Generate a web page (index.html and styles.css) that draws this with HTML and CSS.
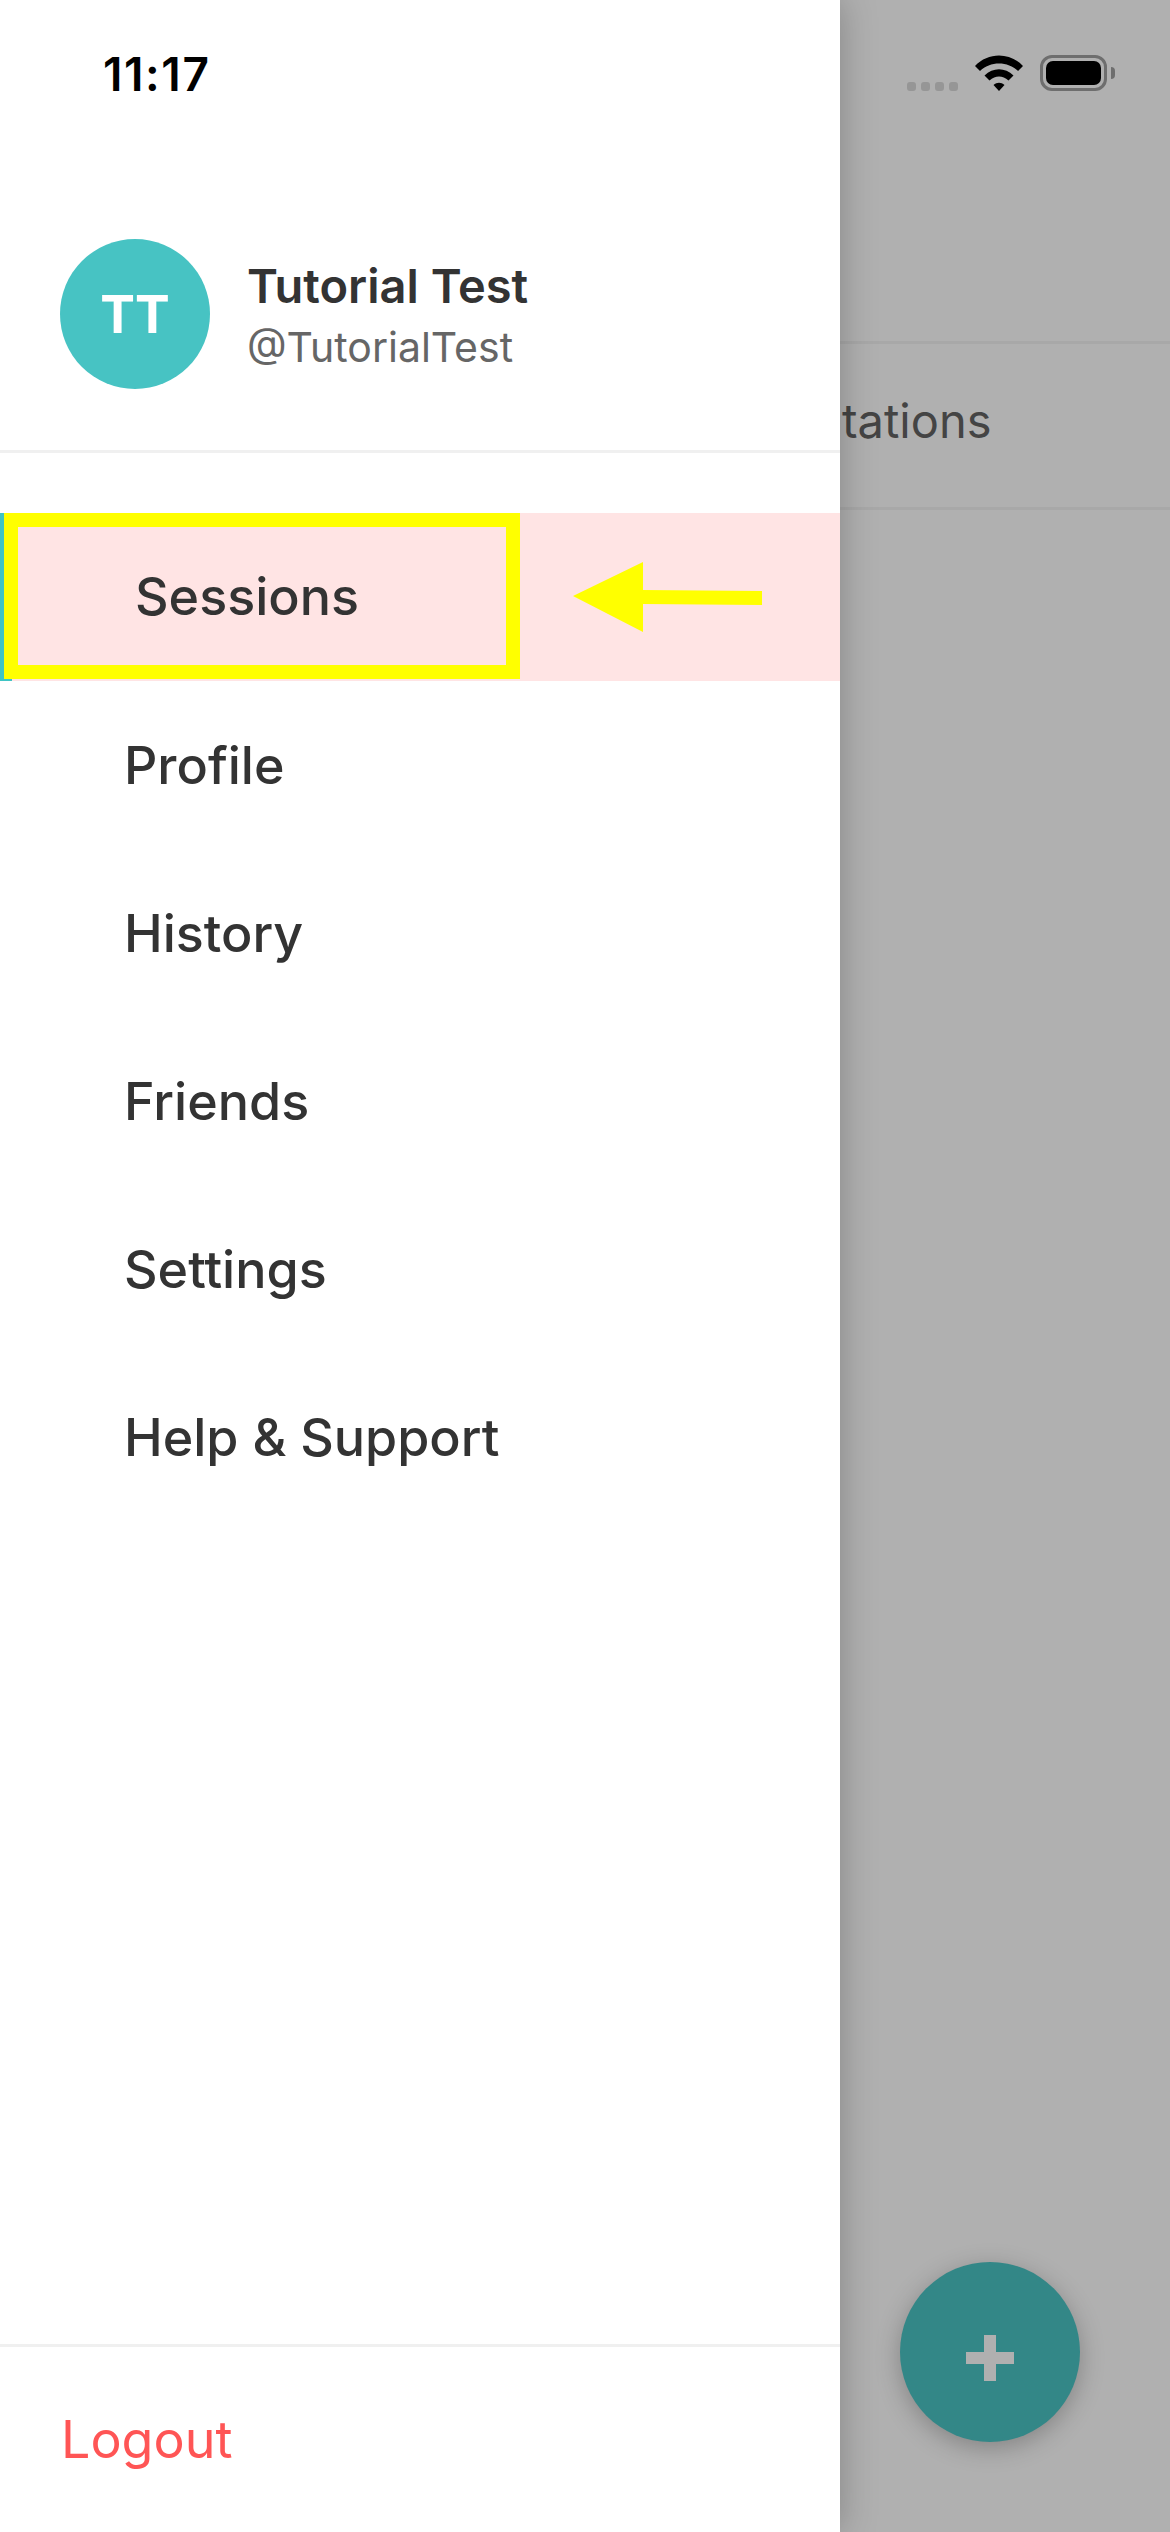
FILE: index.html
```html
<!DOCTYPE html>
<html lang="en">
<head>
    <meta charset="UTF-8">
    <meta name="viewport" content="width=device-width, initial-scale=1.0">
    <title>Sessions Menu</title>
    <link rel="stylesheet" href="styles.css">
</head>
<body>
    <div class="drawer">
        <div class="status-time">11:17</div>

        <div class="user-info">
            <div class="avatar">TT</div>
            <div class="user-text">
                <div class="user-name">Tutorial Test</div>
                <div class="user-handle">@TutorialTest</div>
            </div>
        </div>

        <nav class="menu">
            <div class="menu-item active">
                <div class="highlight-box">Sessions</div>
                <svg class="arrow" width="200" height="80" viewBox="0 0 200 80">
                    <polygon points="0,34 70,0 70,28 189,29 189,43 70,42 70,70" />
                </svg>
            </div>
            <div class="menu-item">Profile</div>
            <div class="menu-item">History</div>
            <div class="menu-item">Friends</div>
            <div class="menu-item">Settings</div>
            <div class="menu-item">Help &amp; Support</div>
        </nav>

        <div class="drawer-footer">
            <div class="logout">Logout</div>
        </div>
    </div>

    <div class="backdrop">
        <div class="status-icons">
            <div class="signal-dots">
                <span></span><span></span><span></span><span></span>
            </div>
            <svg class="wifi" width="48" height="36" viewBox="0 0 48 36">
                <path d="M0 11C13-3 35-3 48 11L43 16C33 6 15 6 5 16Z" />
                <path d="M9.5 20.5C18 12 30 12 38.5 20.5L33.5 25.5C27.5 20 20.5 20 14.5 25.5Z" />
                <path d="M18.5 30C22 27 26 27 29.5 30L24 36Z" />
            </svg>
            <div class="battery">
                <div class="battery-body"><div class="battery-level"></div></div>
                <div class="battery-cap"></div>
            </div>
        </div>

        <div class="tab-row">tations</div>

        <div class="fab">
            <svg width="48" height="46" viewBox="0 0 48 46">
                <path d="M18 0H30V17H48V29H30V46H18V29H0V17H18Z" />
            </svg>
        </div>
    </div>
</body>
</html>
```

FILE: styles.css
```css
body {
    font-family: Inter, "Noto Sans", sans-serif;
    display: flex;
    width: 1170px;
    height: 2532px;
    margin: 0;
    overflow: hidden;
    background-color: #b0b0b0;
    color: #333;
}

.drawer {
    position: relative;
    z-index: 1;
    display: flex;
    flex-direction: column;
    width: 840px;
    height: 2532px;
    background-color: white;
    box-shadow: 0 0 34px rgba(0,0,0,0.25);
}

.status-time {
    padding: 47px 0 0 103px;
    height: 60px;
    font-size: 46px;
    line-height: 54px;
    font-weight: 600;
    letter-spacing: 1.6px;
    color: black;
}

/* user header */
.user-info {
    display: flex;
    align-items: center;
    gap: 37px;
    margin-top: 132px;
    padding: 0 0 61px 60px;
    border-bottom: 3px solid #f0f0f0;
}

.avatar {
    display: flex;
    justify-content: center;
    align-items: center;
    width: 150px;
    height: 150px;
    border-radius: 50%;
    background-color: #47c3c3;
    color: white;
    font-size: 52px;
    font-weight: 700;
}

.user-name {
    font-size: 47px;
    line-height: 56px;
    font-weight: 600;
}

.user-handle {
    margin-top: 9px;
    font-size: 41px;
    line-height: 48px;
    color: #666;
}

/* menu */
.menu {
    margin-top: 60px;
}

.menu-item {
    display: flex;
    align-items: center;
    height: 168px;
    padding-left: 124px;
    font-size: 52px;
    font-weight: 500;
}

.menu-item.active {
    position: relative;
    align-items: flex-start;
    padding-left: 0;
    border-left: 4px solid #3fc4c4;
    background-color: #ffe4e4;
}

.menu-item.active::after {
    content: "";
    position: absolute;
    left: 0;
    bottom: 0;
    width: 8px;
    height: 2px;
    background-color: #3fc4c4;
}

.highlight-box {
    display: flex;
    align-items: center;
    box-sizing: border-box;
    width: 516px;
    height: 166px;
    padding-left: 117px;
    border: 14px solid #ffff00;
}

.arrow {
    position: absolute;
    left: 569px;
    top: 49px;
    fill: #ffff00;
}

.drawer-footer {
    margin-top: auto;
    height: 185px;
    border-top: 3px solid #f0f0f0;
}

.logout {
    padding: 62px 0 0 61px;
    font-size: 52px;
    line-height: 62px;
    color: #ff5555;
}

/* dimmed screen behind the drawer */
.backdrop {
    position: relative;
    flex: 1;
}

.status-icons {
    display: flex;
    align-items: flex-start;
    height: 341px;
    box-sizing: border-box;
    padding: 55px 0 0 67px;
}

.signal-dots {
    display: flex;
    gap: 5px;
    margin-top: 27px;
}

.signal-dots span {
    width: 9px;
    height: 9px;
    border-radius: 3px;
    background-color: #969696;
}

.wifi {
    margin-left: 17px;
}

.battery {
    display: flex;
    align-items: center;
    margin-left: 17px;
}

.battery-body {
    box-sizing: border-box;
    width: 67px;
    height: 36px;
    padding: 3px;
    border: 3px solid #6e6e6e;
    border-radius: 12px;
}

.battery-level {
    height: 100%;
    border-radius: 7px;
    background-color: black;
}

.battery-cap {
    width: 4px;
    height: 12px;
    margin-left: 4px;
    border-radius: 0 6px 6px 0;
    background-color: #6e6e6e;
}

.tab-row {
    box-sizing: border-box;
    height: 169px;
    padding: 0 0 0 2px;
    border-top: 3px solid #a8a8a8;
    border-bottom: 3px solid #a8a8a8;
    font-size: 47px;
    line-height: 154px;
    color: #444;
}

.fab {
    position: absolute;
    left: 60px;
    top: 2262px;
    display: flex;
    justify-content: center;
    width: 180px;
    height: 180px;
    padding-top: 73px;
    box-sizing: border-box;
    border-radius: 50%;
    background-color: #338787;
    box-shadow: 0 6px 24px rgba(0,0,0,0.25);
    fill: #b0b0b0;
}
```
